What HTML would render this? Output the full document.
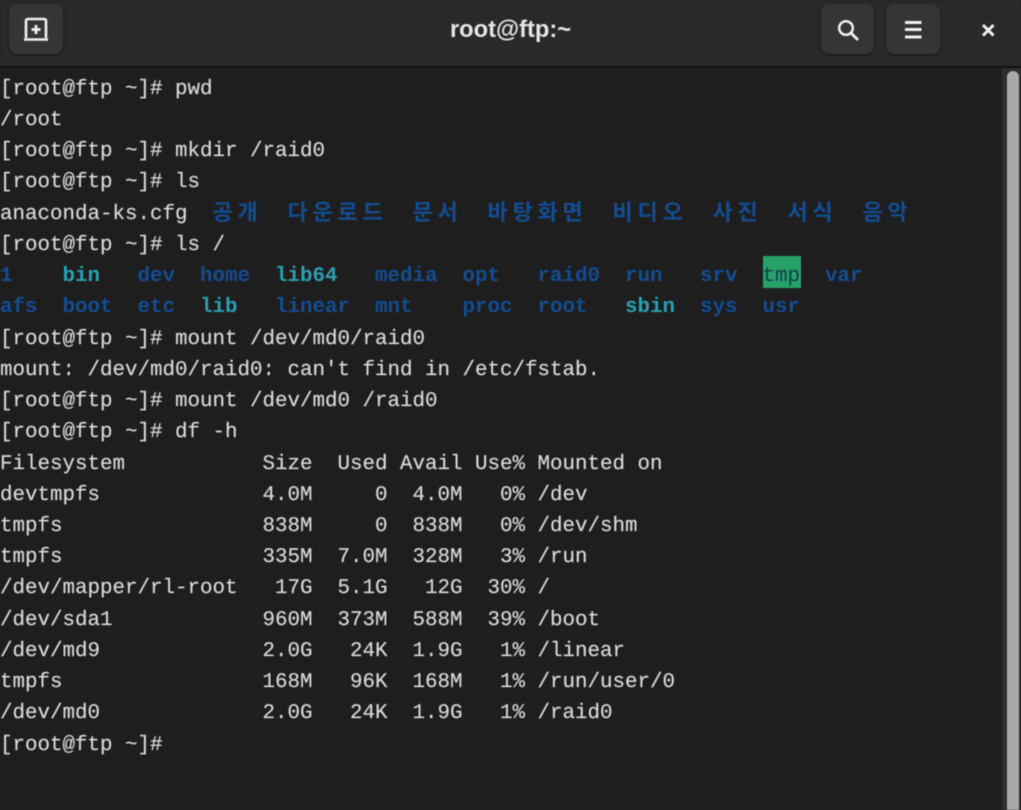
<!DOCTYPE html>
<html><head><meta charset="utf-8"><style>
html,body{margin:0;padding:0;background:#1e1e1e}
#w{position:relative;width:1021px;height:810px;overflow:hidden;background:#1e1e1e;filter:blur(.45px)}
#h{position:absolute;left:0;top:0;width:1021px;height:66px;background:#292929;border-bottom:2px solid #111}
.b{position:absolute;top:4px;height:50px;background:#353535;border-radius:8px;box-shadow:0 1px 2px #141414}
#t{position:absolute;left:0;width:1021px;top:15px;text-align:center;font:bold 23.7px/30px "Liberation Sans",sans-serif;color:#e6e6e6}
svg{position:absolute;left:0;top:0}
pre{position:absolute;left:0;top:73.7px;margin:0;font:20.83px/31.24px "Liberation Mono",monospace;color:#dcdad6;text-rendering:geometricPrecision;-webkit-text-stroke:.15px #dcdad6}
b{font-weight:bold;color:#134d93;-webkit-text-stroke:0}
i{font-style:normal;font-weight:bold;color:#2aa1b3;-webkit-text-stroke:0}
u{text-decoration:none;color:#123f4a;-webkit-text-stroke:0}
#k{position:absolute;left:0;top:197px;height:31px;font:bold 22px/31px "Liberation Sans","Noto Sans CJK KR",sans-serif;color:#134d93}
#k span{position:absolute;top:0;letter-spacing:4.76px;white-space:nowrap}
#g{position:absolute;left:763px;top:256px;width:38px;height:32px;background:#26a269}
#s{position:absolute;left:1002px;top:68px;width:19px;height:742px;background:#2e2e2e}
#m{position:absolute;left:1007px;top:71px;width:12px;height:760px;background:#a9a9a9;border-radius:6px}
</style></head><body><div id="w">
<div id="h"></div>
<div class="b" style="left:9px;width:54px"></div>
<div class="b" style="left:821px;width:53px"></div>
<div class="b" style="left:886px;width:54px"></div>
<div id="t">root@ftp:~</div>
<svg width="1021" height="66" fill="none" stroke="#f0f0f0">
<path d="M26 38V21q0-2 2-2h16q2 0 2 2v17" stroke-width="2.600"/>
<path d="M24 39.500H48" stroke-width="2.600"/>
<path d="M36 25v9M31.500 29.500h9" stroke-width="2.800"/>
<circle cx="846" cy="28" r="6.800" stroke-width="2.500"/>
<path d="M851 33l7 7" stroke-width="2.800"/>
<path d="M905 22.500h16.500M905 29.500h16.500M905 37h16.500" stroke-width="3"/>
<path d="M983 25l10.500 10.500M993.500 25L983 35.500" stroke-width="3"/>
</svg>
<div id="g"></div>
<pre>[root@ftp ~]# pwd
/root
[root@ftp ~]# mkdir /raid0
[root@ftp ~]# ls
anaconda-ks.cfg
[root@ftp ~]# ls /
<b>1</b>    <i>bin</i>   <b>dev</b>  <b>home</b>  <i>lib64</i>   <b>media</b>  <b>opt</b>   <b>raid0</b>  <b>run</b>   <b>srv</b>  <u>tmp</u>  <b>var</b>
<b>afs</b>  <b>boot</b>  <b>etc</b>  <i>lib</i>   <b>linear</b>  <b>mnt</b>    <b>proc</b>  <b>root</b>   <i>sbin</i>  <b>sys</b>  <b>usr</b>
[root@ftp ~]# mount /dev/md0/raid0
mount: /dev/md0/raid0: can't find in /etc/fstab.
[root@ftp ~]# mount /dev/md0 /raid0
[root@ftp ~]# df -h
Filesystem           Size  Used Avail Use% Mounted on
devtmpfs             4.0M     0  4.0M   0% /dev
tmpfs                838M     0  838M   0% /dev/shm
tmpfs                335M  7.0M  328M   3% /run
/dev/mapper/rl-root   17G  5.1G   12G  30% /
/dev/sda1            960M  373M  588M  39% /boot
/dev/md9             2.0G   24K  1.9G   1% /linear
tmpfs                168M   96K  168M   1% /run/user/0
/dev/md0             2.0G   24K  1.9G   1% /raid0
[root@ftp ~]#</pre>
<div id="k">
<span style="left:212.500px">공개</span>
<span style="left:287.500px">다운로드</span>
<span style="left:412.500px">문서</span>
<span style="left:487.500px">바탕화면</span>
<span style="left:612.500px">비디오</span>
<span style="left:712.500px">사진</span>
<span style="left:787.500px">서식</span>
<span style="left:862.500px">음악</span>
</div>
<div id="s"></div><div id="m"></div>
</div></body></html>
